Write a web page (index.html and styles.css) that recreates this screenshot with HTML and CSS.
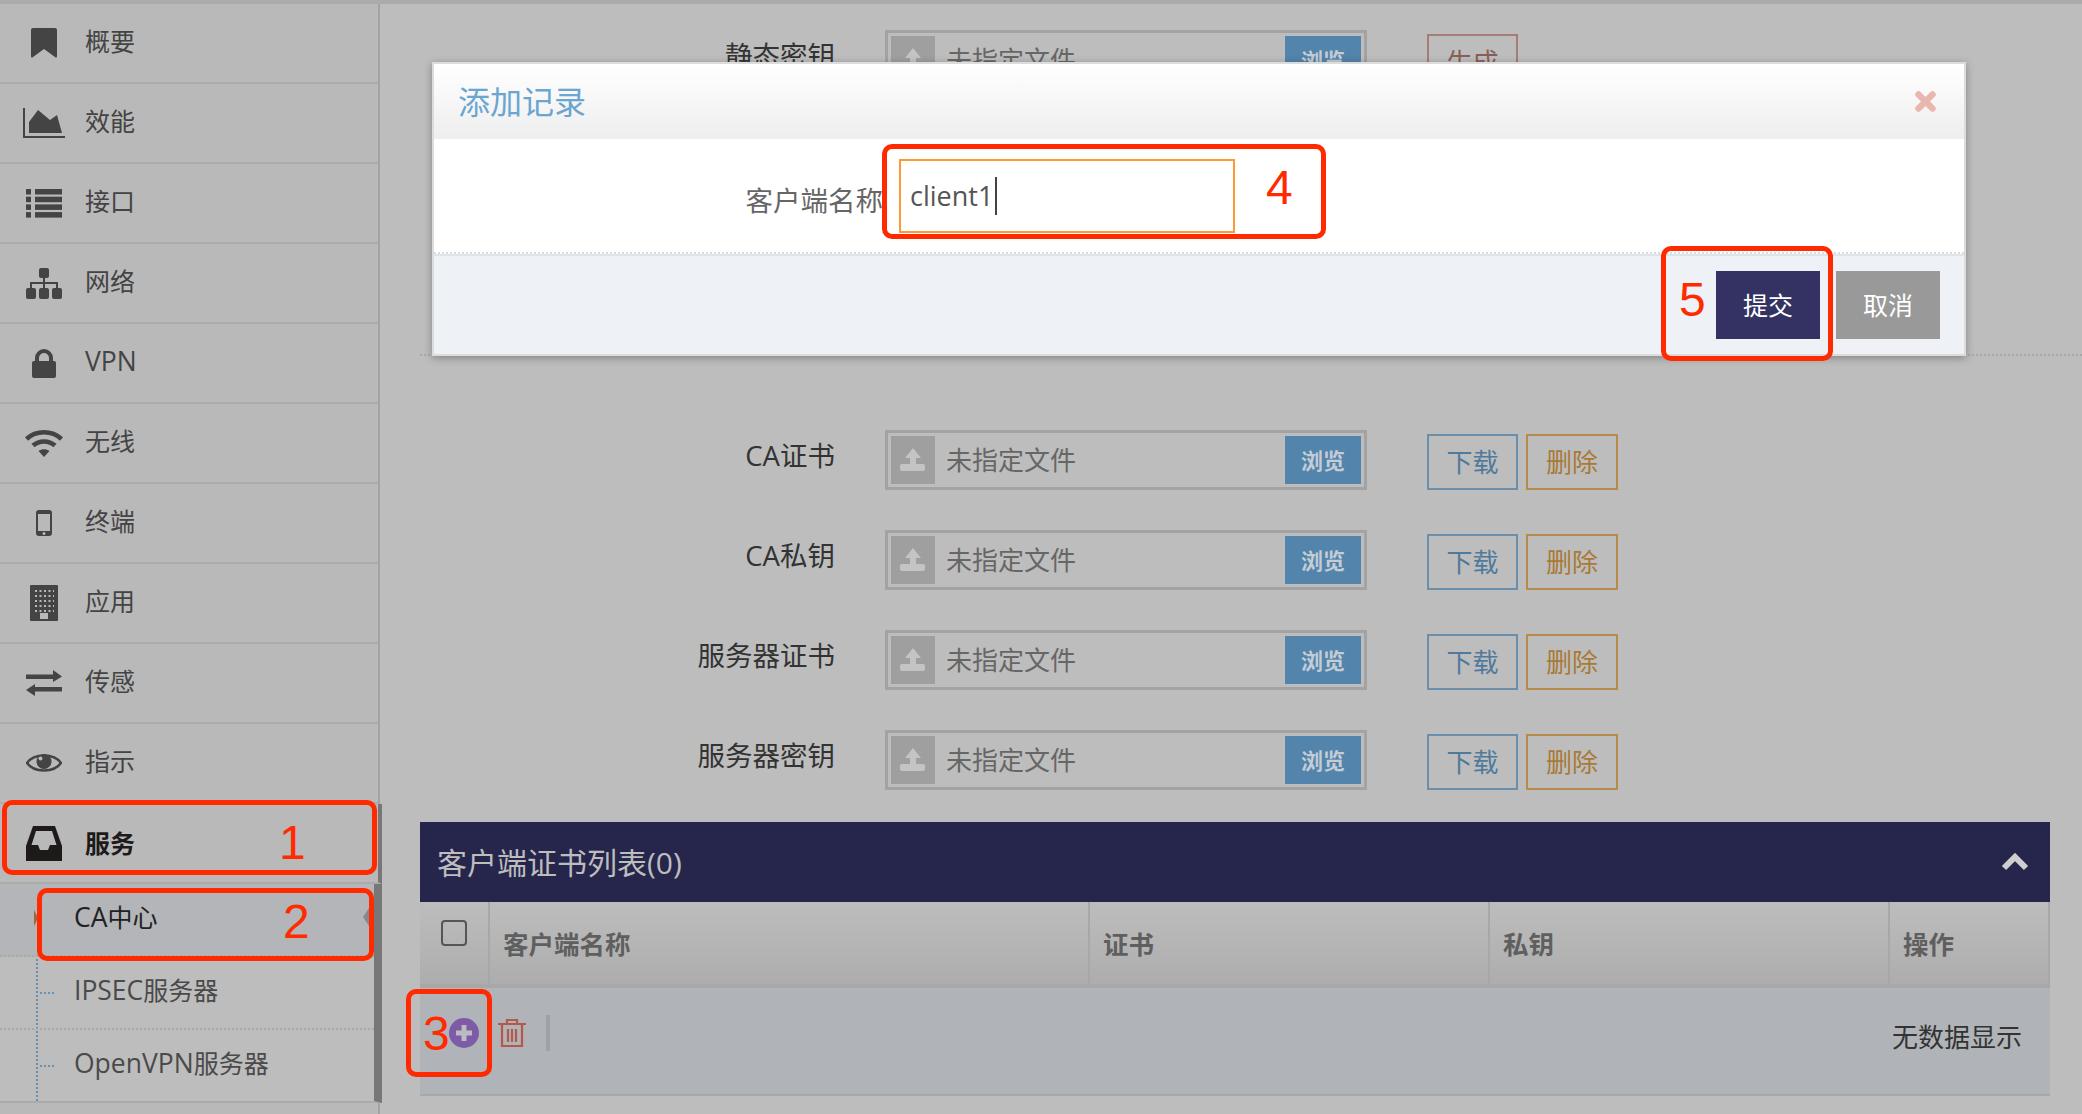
FILE: index.html

```html
<!DOCTYPE html>
<html lang="zh-CN">
<head>
  <meta charset="UTF-8">
  <title>CA中心</title>
  <link rel="stylesheet" href="styles.css">
</head>
<body>
<div class="page">
  <aside class="sidebar">
    <ul class="nav">
      <li class="nav-item">
        <span class="nav-icon"><svg width="26" height="30" viewBox="0 0 26 30"><path d="M2 0h22a2 2 0 0 1 2 2v26.500a1 1 0 0 1-1.700.7L13 21 1.700 29.200A1 1 0 0 1 0 28.500V2a2 2 0 0 1 2-2z"/></svg></span>
        <span class="nav-text">概要</span>
      </li>
      <li class="nav-item">
        <span class="nav-icon"><svg width="42" height="30" viewBox="0 0 42 30"><path d="M1 0v29h41" fill="none" stroke="#444" stroke-width="2"/><polygon points="6,25 6,14 15,2 27,12 34,7 39,25"/></svg></span>
        <span class="nav-text">效能</span>
      </li>
      <li class="nav-item">
        <span class="nav-icon"><svg width="36" height="29" viewBox="0 0 36 29"><rect width="5" height="5.500"/><rect x="9" width="27" height="5.500"/><rect y="7.700" width="5" height="5.500"/><rect x="9" y="7.700" width="27" height="5.500"/><rect y="15.400" width="5" height="5.500"/><rect x="9" y="15.400" width="27" height="5.500"/><rect y="23.100" width="5" height="5.500"/><rect x="9" y="23.100" width="27" height="5.500"/></svg></span>
        <span class="nav-text">接口</span>
      </li>
      <li class="nav-item">
        <span class="nav-icon"><svg width="36" height="31" viewBox="0 0 36 31"><rect x="13" width="10" height="10" rx="2"/><rect y="20" width="10" height="11" rx="2"/><rect x="13" y="20" width="10" height="11" rx="2"/><rect x="26" y="20" width="10" height="11" rx="2"/><path d="M18 10v10M5 20v-5h26v5" fill="none" stroke="#444" stroke-width="2"/></svg></span>
        <span class="nav-text">网络</span>
      </li>
      <li class="nav-item">
        <span class="nav-icon"><svg width="24" height="29" viewBox="0 0 24 29"><path d="M5 13V9a7 7 0 0 1 14 0v4" fill="none" stroke="#444" stroke-width="4"/><rect y="12" width="24" height="17" rx="2"/></svg></span>
        <span class="nav-text nav-latin">VPN</span>
      </li>
      <li class="nav-item">
        <span class="nav-icon"><svg width="40" height="28" viewBox="0 0 40 28"><path d="M2.500 10C12 1 28 1 37.500 10M9 16.500C15 11 25 11 31 16.500" fill="none" stroke="#444" stroke-width="4.500"/><path d="M14.500 22C18 19.500 22 19.500 25.500 22L20 28z"/></svg></span>
        <span class="nav-text">无线</span>
      </li>
      <li class="nav-item">
        <span class="nav-icon"><svg width="16" height="26" viewBox="0 0 16 26"><path fill-rule="evenodd" d="M3 0h10a3 3 0 0 1 3 3v20a3 3 0 0 1-3 3H3a3 3 0 0 1-3-3V3a3 3 0 0 1 3-3zM2 4v17h12V4zM8 22a1.500 1.500 0 1 0 0 3 1.500 1.500 0 0 0 0-3z"/></svg></span>
        <span class="nav-text">终端</span>
      </li>
      <li class="nav-item">
        <span class="nav-icon"><svg width="28" height="36" viewBox="0 0 28 36"><rect width="28" height="36" rx="1"/><path d="M5 6h19M5 11h19M5 16h19M5 21h19M5 26h19" stroke="#b9b9b9" stroke-width="2" stroke-dasharray="2 2.500"/><rect x="10" y="28" width="8" height="6" fill="#b9b9b9"/></svg></span>
        <span class="nav-text">应用</span>
      </li>
      <li class="nav-item">
        <span class="nav-icon"><svg width="36" height="26" viewBox="0 0 36 26"><path d="M0 4.500h27V0l9 6.500L27 12V9H0zM36 17H9v-3l-9 6 9 6v-4.500h27z"/></svg></span>
        <span class="nav-text">传感</span>
      </li>
      <li class="nav-item">
        <span class="nav-icon"><svg width="36" height="22" viewBox="0 0 36 22"><path d="M1 11C8 1 28 1 35 11 28 21 8 21 1 11z" fill="none" stroke="#444" stroke-width="2.400"/><circle cx="18" cy="9.500" r="7.500"/><circle cx="14.500" cy="6.500" r="2" fill="#b9b9b9"/></svg></span>
        <span class="nav-text">指示</span>
      </li>
      <li class="nav-item open">
        <span class="nav-icon"><svg width="36" height="35" viewBox="0 0 36 35"><path fill-rule="evenodd" fill="#1e1a1a" d="M7 0h22l7 20v15H0V20zM10 5h16l4.500 14H24l-2 5h-8l-2-5H5.500z"/></svg></span>
        <span class="nav-text">服务</span>
      </li>
    </ul>
    <ul class="submenu">
      <li class="sub-item active"><span class="latin">CA</span>中心</li>
      <li class="sub-item"><span class="latin">IPSEC</span>服务器</li>
      <li class="sub-item"><span class="latin">OpenVPN</span>服务器</li>
    </ul>
  </aside>

  <main class="content">
    <section class="form-top">
      <div class="form-row">
        <label class="form-label">静态密钥</label>
        <div class="file-box">
          <span class="file-icon"><svg width="44" height="48" viewBox="0 0 44 48"><path d="M22 12l8 10h-5v11h-6V22h-5z"/><rect x="9" y="28" width="25" height="7" rx="2"/></svg></span>
          <span class="file-text">未指定文件</span>
          <span class="file-browse">浏览</span>
        </div>
        <button class="btn-line btn-generate">生成</button>
      </div>
    </section>

    <section class="form-list">
      <div class="form-row">
        <label class="form-label">CA证书</label>
        <div class="file-box">
          <span class="file-icon"><svg width="44" height="48" viewBox="0 0 44 48"><path d="M22 12l8 10h-5v11h-6V22h-5z"/><rect x="9" y="28" width="25" height="7" rx="2"/></svg></span>
          <span class="file-text">未指定文件</span>
          <span class="file-browse">浏览</span>
        </div>
        <button class="btn-line btn-download">下载</button>
        <button class="btn-line btn-delete">删除</button>
      </div>
      <div class="form-row">
        <label class="form-label">CA私钥</label>
        <div class="file-box">
          <span class="file-icon"><svg width="44" height="48" viewBox="0 0 44 48"><path d="M22 12l8 10h-5v11h-6V22h-5z"/><rect x="9" y="28" width="25" height="7" rx="2"/></svg></span>
          <span class="file-text">未指定文件</span>
          <span class="file-browse">浏览</span>
        </div>
        <button class="btn-line btn-download">下载</button>
        <button class="btn-line btn-delete">删除</button>
      </div>
      <div class="form-row">
        <label class="form-label">服务器证书</label>
        <div class="file-box">
          <span class="file-icon"><svg width="44" height="48" viewBox="0 0 44 48"><path d="M22 12l8 10h-5v11h-6V22h-5z"/><rect x="9" y="28" width="25" height="7" rx="2"/></svg></span>
          <span class="file-text">未指定文件</span>
          <span class="file-browse">浏览</span>
        </div>
        <button class="btn-line btn-download">下载</button>
        <button class="btn-line btn-delete">删除</button>
      </div>
      <div class="form-row">
        <label class="form-label">服务器密钥</label>
        <div class="file-box">
          <span class="file-icon"><svg width="44" height="48" viewBox="0 0 44 48"><path d="M22 12l8 10h-5v11h-6V22h-5z"/><rect x="9" y="28" width="25" height="7" rx="2"/></svg></span>
          <span class="file-text">未指定文件</span>
          <span class="file-browse">浏览</span>
        </div>
        <button class="btn-line btn-download">下载</button>
        <button class="btn-line btn-delete">删除</button>
      </div>
    </section>

    <section class="panel">
      <div class="panel-head">
        <span class="panel-title">客户端证书列表(0)</span>
        <svg width="28" height="18" viewBox="0 0 28 18"><path d="M3 15L14 4l11 11" fill="none" stroke="#cfcfcf" stroke-width="6"/></svg>
      </div>
      <table class="cert-table">
        <thead>
          <tr>
            <th class="col-check"><span class="check"></span></th>
            <th class="col-name">客户端名称</th>
            <th class="col-cert">证书</th>
            <th class="col-key">私钥</th>
            <th>操作</th>
          </tr>
        </thead>
      </table>
      <div class="toolbar">
        <svg class="tool-add" width="30" height="30" viewBox="0 0 30 30"><circle cx="15" cy="15" r="15" fill="#7d5ba6"/><path d="M15 7v16M7 15h16" stroke="#b9bcc2" stroke-width="5"/></svg>
        <svg class="tool-del" width="28" height="30" viewBox="0 0 28 30"><path d="M0 6h28M9 6V2h10v4M4 6v22h20V6M10 11v13M14 11v13M18 11v13" fill="none" stroke="#b5584a" stroke-width="2.200"/></svg>
        <span class="tool-sep"></span>
        <span class="tool-empty">无数据显示</span>
      </div>
    </section>
  </main>

  <div class="modal">
    <div class="modal-head">
      <span class="modal-title">添加记录</span>
      <svg width="21" height="21" viewBox="0 0 21 21"><path d="M3.500 3.500l14 14M17.500 3.500l-14 14" stroke="#e8b8b0" stroke-width="6.500" stroke-linecap="round"/></svg>
    </div>
    <div class="modal-body">
      <label class="modal-label">客户端名称</label>
      <div class="modal-input">client1<span class="caret"></span></div>
    </div>
    <div class="modal-foot">
      <button class="btn-solid btn-submit">提交</button>
      <button class="btn-solid btn-cancel">取消</button>
    </div>
  </div>

  <div class="mark mark-1"></div>
  <div class="mark mark-2"></div>
  <div class="mark mark-3"></div>
  <div class="mark mark-4"></div>
  <div class="mark mark-5"></div>
  <span class="num num-1">1</span>
  <span class="num num-2">2</span>
  <span class="num num-3">3</span>
  <span class="num num-4">4</span>
  <span class="num num-5">5</span>
</div>
</body>
</html>
```

FILE: styles.css

```css
* {
  box-sizing: border-box;
}
body {
  margin: 0;
  font-family: "Open Sans", "Noto Sans CJK SC", sans-serif;
  color: #333;
  background-color: #bdbdbd;
}
ul {
  margin: 0;
  padding: 0;
  list-style: none;
}
.page {
  position: relative;
  display: flex;
  width: 2082px;
  height: 1114px;
  overflow: hidden;
  border-top: 4px solid #ababab;
}

/* sidebar */
.sidebar {
  width: 380px;
  flex-shrink: 0;
  background-color: #b9b9b9;
  border-right: 2px solid #a3a3a3;
}
.nav-item {
  display: flex;
  align-items: center;
  height: 80px;
  border-bottom: 2px solid #ababab;
  font-size: 25px;
  color: #444;
}
.nav-icon {
  display: flex;
  justify-content: center;
  width: 44px;
  margin-left: 22px;
  margin-right: 19px;
}
.nav-icon svg {
  fill: #444;
}
.nav-text {
  margin-bottom: 7px;
}
.nav-latin {
  margin-bottom: 5px;
  font-size: 26.500px;
}
.nav-item.open {
  margin-right: -4px;
  border-right: 4px solid #777;
  font-weight: bold;
  color: #1e1a1a;
}
.nav-item.open .nav-text {
  margin-bottom: 2px;
}
.submenu {
  position: relative;
  margin-right: -4px;
  border-right: 8px solid #777;
  border-bottom: 2px solid #ababab;
  background-color: #bdbdbd;
}
.submenu::before {
  content: "";
  position: absolute;
  left: 36px;
  top: 0;
  bottom: 0;
  border-left: 2px dotted #6d8fae;
}
.sub-item {
  position: relative;
  height: 73px;
  padding: 17px 0 0 74px;
  font-size: 25px;
  line-height: 32px;
  color: #4a4a4a;
  border-bottom: 2px dotted #a8a8a8;
}
.latin {
  font-size: 26.500px;
}
.sub-item::before {
  content: "";
  position: absolute;
  left: 40px;
  top: 35px;
  width: 14px;
  border-top: 2px dotted #6d8fae;
}
.sub-item:last-child {
  height: 71px;
  border-bottom: none;
}
.sub-item.active {
  color: #222;
  background-color: #b3b5b8;
}
.sub-item.active::before {
  left: 34px;
  top: 26px;
  width: 0;
  border-top: 8px solid transparent;
  border-bottom: 8px solid transparent;
  border-left: 4px solid #a0623f;
}
.sub-item.active::after {
  content: "";
  position: absolute;
  right: 5px;
  top: 24px;
  border-top: 9px solid transparent;
  border-bottom: 9px solid transparent;
  border-right: 6px solid #888;
}

/* main form */
.content {
  flex: 1;
  padding: 0 32px 0 40px;
  min-width: 0;
}
.form-top {
  height: 352px;
  margin-right: -32px;
  padding-top: 26px;
  border-bottom: 2px dotted #a8a8a8;
}
.form-list {
  padding-top: 74px;
}
.form-row {
  display: flex;
  align-items: flex-start;
  height: 60px;
  margin-bottom: 40px;
}
.form-label {
  width: 415px;
  margin-right: 50px;
  font-size: 27.500px;
  line-height: 52px;
  text-align: right;
  color: #333;
}
.file-box {
  display: flex;
  align-items: center;
  width: 482px;
  height: 60px;
  margin-right: 60px;
  padding: 3px;
  border: 3px solid #a3a3a3;
}
.file-icon {
  display: flex;
  width: 44px;
  height: 48px;
  background-color: #9f9f9f;
}
.file-icon svg {
  fill: #c4c4c4;
}
.file-text {
  flex: 1;
  padding: 0 0 2px 11px;
  font-size: 26px;
  color: #666;
}
.file-browse {
  width: 76px;
  height: 48px;
  font-size: 22px;
  font-weight: bold;
  line-height: 48px;
  text-align: center;
  color: #c4ccd4;
  background-color: #5384ac;
}
.btn-line {
  width: 91px;
  height: 56px;
  margin-top: 4px;
  padding: 0 0 3px;
  background: none;
  border: 2px solid;
  font-family: inherit;
  font-size: 26px;
}
.btn-download {
  color: #4f7a9c;
  border-color: #6a8fab;
}
.btn-delete {
  width: 92px;
  margin-left: 8px;
  color: #a87a35;
  border-color: #b58a4a;
}
.btn-generate {
  color: #8a5e58;
  border-color: #a57d76;
}

/* client cert panel */
.panel {
  margin-top: -8px;
}
.panel-head {
  display: flex;
  align-items: center;
  justify-content: space-between;
  height: 80px;
  padding: 0 21px 0 17px;
  color: #bdbdbd;
  background-color: #26264d;
}
.panel-title {
  margin-bottom: 3px;
  font-size: 30px;
}
.cert-table {
  width: 100%;
  border-collapse: collapse;
  table-layout: fixed;
}
.cert-table th {
  height: 84px;
  padding: 0 0 2px 13px;
  border-right: 2px solid #a8a8a8;
  border-bottom: 4px solid #a8a8a8;
  font-size: 25.500px;
  font-weight: bold;
  text-align: left;
  color: #5f5f5f;
  background: linear-gradient(#bdbdbd, #adadad);
}
.col-check {
  width: 69px;
}
.col-name {
  width: 600px;
}
.col-cert,
.col-key {
  width: 400px;
}
.cert-table .col-check {
  padding: 18px 0 0 21px;
  vertical-align: top;
}
.check {
  display: block;
  width: 26px;
  height: 26px;
  border: 2px solid #555;
  border-radius: 4px;
}
.toolbar {
  display: flex;
  align-items: center;
  height: 108px;
  padding: 0 28px 17px 29px;
  background-color: #b0b3b8;
  border-bottom: 2px solid #a8a8a8;
}
.tool-del {
  margin-left: 19px;
}
.tool-sep {
  width: 4px;
  height: 36px;
  margin-left: 20px;
  background-color: #9ea1a6;
}
.tool-empty {
  margin-left: auto;
  padding-top: 6px;
  font-size: 26px;
  color: #333;
}

/* modal */
.modal {
  position: absolute;
  top: 58px;
  left: 432px;
  display: flex;
  flex-direction: column;
  width: 1534px;
  height: 294px;
  background-color: #fff;
  border: 2px solid #dcdcdc;
  box-shadow: 0 2px 8px rgba(0, 0, 0, 0.3);
}
.modal-head {
  display: flex;
  align-items: center;
  justify-content: space-between;
  height: 75px;
  padding: 0 28px 0 24px;
  background: linear-gradient(#fff, #eee);
}
.modal-title {
  margin-bottom: 4px;
  font-size: 32px;
  color: #6aa6d0;
}
.modal-body {
  display: flex;
  align-items: center;
  height: 115px;
  border-bottom: 2px dotted #dcdcdc;
}
.modal-label {
  width: 449px;
  margin-right: 16px;
  padding-top: 6px;
  font-size: 27.500px;
  text-align: right;
  color: #666;
}
.modal-input {
  display: flex;
  align-items: center;
  width: 336px;
  height: 74px;
  padding-left: 9px;
  border: 2px solid #f93;
  font-size: 27px;
  color: #555;
}
.caret {
  width: 2px;
  height: 38px;
  margin-left: 2px;
  background-color: #444;
}
.modal-foot {
  display: flex;
  flex: 1;
  justify-content: flex-end;
  gap: 16px;
  padding: 15px 24px 0 0;
  background-color: #eef1f6;
  border-top: 2px solid #dde4ea;
}
.btn-solid {
  width: 104px;
  height: 68px;
  padding: 0 0 3px;
  border: none;
  font-family: inherit;
  font-size: 25px;
  color: #fff;
}
.btn-submit {
  background-color: #333263;
}
.btn-cancel {
  background-color: #999;
}

/* red annotations laid over the screenshot */
.mark {
  position: absolute;
  border: 5px solid #ff2a00;
  border-radius: 10px;
}
.mark-1 {
  left: 2px;
  top: 796px;
  width: 375px;
  height: 75px;
}
.mark-2 {
  left: 37px;
  top: 884px;
  width: 337px;
  height: 73px;
}
.mark-3 {
  left: 406px;
  top: 985px;
  width: 86px;
  height: 88px;
}
.mark-4 {
  left: 882px;
  top: 140px;
  width: 444px;
  height: 95px;
}
.mark-5 {
  left: 1661px;
  top: 242px;
  width: 172px;
  height: 115px;
}
.num {
  position: absolute;
  font-family: "Liberation Sans", sans-serif;
  font-size: 48px;
  line-height: 48px;
  color: #ff2a00;
}
.num-1 {
  left: 279px;
  top: 815px;
}
.num-2 {
  left: 283px;
  top: 894px;
}
.num-3 {
  left: 423px;
  top: 1006px;
}
.num-4 {
  left: 1266px;
  top: 160px;
}
.num-5 {
  left: 1679px;
  top: 272px;
}
```
